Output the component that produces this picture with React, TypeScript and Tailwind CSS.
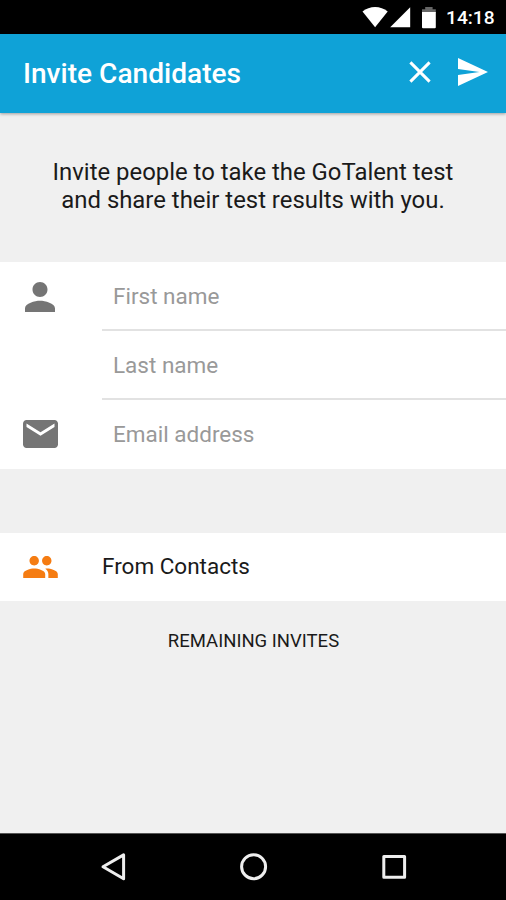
import React from "react";

function StatusBar() {
  return (
    <div className="flex h-[34px] shrink-0 items-center justify-end bg-black pr-[11px] text-white">
      <svg className="h-[34px] w-[78px]" viewBox="360 0 78 34">
        <path d="M362.5 11.6C369.5 5.6 380.7 5.6 387.7 11.6L375.1 27.2Z" fill="#fff" />
        <path d="M410.2 7.2V27.3H390.2Z" fill="#fff" />
        <path d="M422 11V9.2H425.2V7H432.6V9.2H435.8V13H422Z" fill="#666" />
        <path d="M422 12H435.8V27.2Q435.8 28.2 434.8 28.2H423Q422 28.2 422 27.2Z" fill="#fff" />
      </svg>
      <span className="ml-[8px] w-[49px] whitespace-nowrap pt-[2px] text-[19.2px] leading-[34px] font-medium">14:18</span>
    </div>
  );
}

function AppBar() {
  return (
    <header className="z-10 flex h-[79px] shrink-0 items-center bg-[#0fa2d7] pl-[23px] pr-[18px] text-white shadow-[0_1px_3px_rgba(0,0,0,0.35)]">
      <h1 className="flex-1 whitespace-nowrap pt-[1px] text-[28.1px] font-medium">Invite Candidates</h1>
      <button type="button" aria-label="Close">
        <svg className="mb-[3px] h-[22px] w-[22px]" viewBox="0 0 22 22" fill="none" stroke="#fff" strokeWidth="3">
          <path d="M1.4 1.4L20.6 20.6M20.6 1.4L1.4 20.6" />
        </svg>
      </button>
      <button type="button" aria-label="Send" className="ml-[27px]">
        <svg className="mb-[3px] h-[28px] w-[30px]" viewBox="2 3 21 18" preserveAspectRatio="none" fill="#fff">
          <path d="M2.01 21L23 12 2.01 3 2 10l15 2-15 2z" />
        </svg>
      </button>
    </header>
  );
}

function PersonIcon() {
  return (
    <svg className="h-[30px] w-[30px]" viewBox="4 4 16 16" fill="#757575">
      <path d="M12 12c2.21 0 4-1.79 4-4s-1.79-4-4-4-4 1.79-4 4 1.79 4 4 4zm0 2c-2.67 0-8 1.34-8 4v2h16v-2c0-2.66-5.33-4-8-4z" />
    </svg>
  );
}

function MailIcon() {
  return (
    <svg className="mb-[1px] h-[28px] w-[35px]" viewBox="2 4 20 16" fill="#757575">
      <path d="M20 4H4c-1.1 0-1.99.9-1.99 2L2 18c0 1.1.9 2 2 2h16c1.1 0 2-.9 2-2V6c0-1.1-.9-2-2-2zm0 4l-8 5-8-5V6l8 5 8-5v2z" />
    </svg>
  );
}

function PeopleIcon() {
  return (
    <svg className="mb-[1px] h-[22px] w-[35px]" viewBox="1 5 22 14" fill="#f57c12">
      <path d="M16 11c1.66 0 2.99-1.34 2.99-3S17.66 5 16 5c-1.66 0-3 1.34-3 3s1.34 3 3 3zm-8 0c1.66 0 2.99-1.34 2.99-3S9.66 5 8 5C6.34 5 5 6.34 5 8s1.34 3 3 3zm0 2c-2.33 0-7 1.17-7 3.5V19h14v-2.5c0-2.33-4.67-3.5-7-3.5zm8 0c-.29 0-.62.02-.97.05 1.16.84 1.97 1.97 1.97 3.45V19h6v-2.5c0-2.33-4.67-3.5-7-3.5z" />
    </svg>
  );
}

function Field({ icon, label, last }: { icon?: React.ReactNode; label: string; last?: boolean }) {
  return (
    <div className="flex h-[69px]">
      <div className="flex w-[102px] shrink-0 items-center pl-[22px]">
        <div className="flex w-[36px] justify-center">{icon}</div>
      </div>
      <div className={"flex flex-1 items-center border-b-2 pl-[11px] text-[22.5px] text-[#999] " + (last ? "border-transparent" : "border-[#e2e2e2]")}>
        <span className="whitespace-nowrap pt-[2px]">{label}</span>
      </div>
    </div>
  );
}

function NavBar() {
  return (
    <nav className="flex h-[67px] shrink-0 items-center border-t border-[#555] bg-black">
      <svg className="h-[66px] w-full" viewBox="0 834 506 66" fill="none" stroke="#eee" strokeWidth="3" strokeLinejoin="round">
        <path d="M103 866.8L123.6 854.9V878.7Z" />
        <circle cx="253.6" cy="866.7" r="12" />
        <rect x="383.8" y="856.4" width="20.8" height="20.8" />
      </svg>
    </nav>
  );
}

export default function App() {
  return (
    <div className="flex h-[900px] w-[506px] flex-col overflow-hidden bg-[#f0f0f0] font-['Roboto',sans-serif]">
      <StatusBar />
      <AppBar />
      <main className="flex flex-1 flex-col">
        <p className="h-[149px] whitespace-nowrap pt-[45px] text-center text-[23.9px] leading-[28px] text-[#1a1a1a]">
          Invite people to take the GoTalent test
          <br />
          and share their test results with you.
        </p>
        <section className="h-[207px] bg-white">
          <Field icon={<PersonIcon />} label="First name" />
          <Field label="Last name" />
          <Field icon={<MailIcon />} label="Email address" last />
        </section>
        <section className="mt-[64px] flex h-[68px] items-center bg-white pl-[23px]">
          <PeopleIcon />
          <span className="ml-[44px] whitespace-nowrap text-[22.5px] text-[#1a1a1a]">From Contacts</span>
        </section>
        <h2 className="mt-[29px] pl-[1px] text-center text-[18.5px] leading-[22px] text-[#1a1a1a]">REMAINING INVITES</h2>
      </main>
      <NavBar />
    </div>
  );
}
